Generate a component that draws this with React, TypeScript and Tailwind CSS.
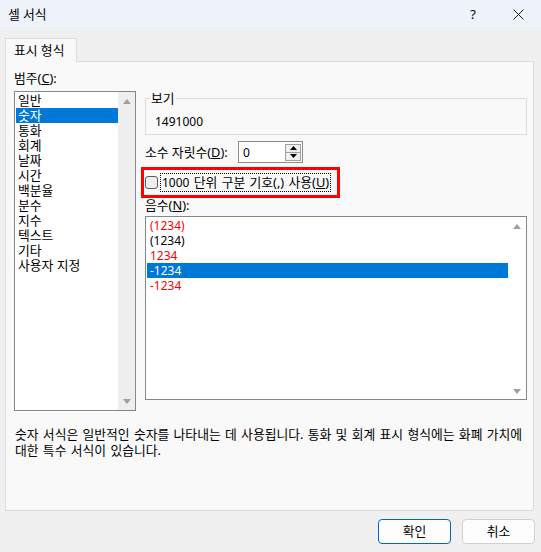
import React from "react";

const Up = ({ color = "#a0a0a0", w = 8, h = 5 }: { color?: string; w?: number; h?: number }) => (
  <svg width={w} height={h} viewBox={`0 0 ${w} ${h}`}>
    <path d={`M0 ${h} L${w / 2} 0 L${w} ${h} Z`} fill={color} />
  </svg>
);
const Down = ({ color = "#a0a0a0", w = 8, h = 5 }: { color?: string; w?: number; h?: number }) => (
  <svg width={w} height={h} viewBox={`0 0 ${w} ${h}`}>
    <path d={`M0 0 L${w / 2} ${h} L${w} 0 Z`} fill={color} />
  </svg>
);

const categories = ["일반", "숫자", "통화", "회계", "날짜", "시간", "백분율", "분수", "지수", "텍스트", "기타", "사용자 지정"];

const negatives: { t: string; c: string; sel?: boolean }[] = [
  { t: "(1234)", c: "text-[#ff0000]" },
  { t: "(1234)", c: "text-black" },
  { t: "1234", c: "text-[#ff0000]" },
  { t: "-1234", c: "text-white", sel: true },
  { t: "-1234", c: "text-[#ff0000]" },
];

export default function App() {
  return (
    <div className="w-[541px] h-[552px] bg-[#f0f0f0] flex flex-col text-[12.8px] leading-[15px] text-black font-[family-name:'Noto_Sans','Noto_Sans_CJK_KR',sans-serif] overflow-hidden">
      {/* Title bar */}
      <div className="h-[29px] shrink-0 bg-[#eef2f9] flex items-center pl-[8px] pr-[17px]">
        <span className="flex-1">셀 서식</span>
        <span className="text-[13px]">?</span>
        <svg width="11" height="11" viewBox="0 0 11 11" className="ml-[37px]">
          <path d="M0.5 0.5 L10.5 10.5 M10.5 0.5 L0.5 10.5" stroke="#1a1a1a" strokeWidth="1" />
        </svg>
      </div>

      {/* Tab */}
      <div className="mt-[9px] pl-[5px] flex">
        <div className="w-[72px] h-[24px] -mb-px relative z-10 border border-b-0 border-[#dcdcdc] bg-[#f9f9f9] pl-[8px] flex items-center">
          표시 형식
        </div>
      </div>

      {/* Panel */}
      <div className="ml-[5px] w-[529px] h-[450px] shrink-0 border border-[#dcdcdc] bg-[#f9f9f9] pt-[9px] flex flex-col">
        <div className="flex items-start pl-[8px]">
          {/* Left column */}
          <div className="w-[122px] flex flex-col">
            <div className="h-[15px]">
              범주(<span className="underline">C</span>):
            </div>
            <div className="mt-[5px] h-[320px] border border-[#828790] bg-white flex">
              <div className="flex-1 pl-[1px] pt-[1px] flex flex-col">
                {categories.map((c, i) => (
                  <div
                    key={c}
                    className={`h-[15px] pl-[2px] whitespace-nowrap ${i === 1 ? "bg-[#0078d7] text-white" : ""}`}
                  >
                    {c}
                  </div>
                ))}
              </div>
              <div className="w-[17px] bg-[#eeeeee] flex flex-col items-center justify-between pt-[7px] pb-[6px]">
                <Up />
                <Down />
              </div>
            </div>
          </div>

          {/* Right column */}
          <div className="ml-[9px] w-[382px] mt-[27px] flex flex-col">
            {/* Sample group */}
            <div className="relative h-[37px] border border-[#dcdcdc] pl-[9px] pt-[15px] text-[12px]">
              <span className="absolute -top-[8px] left-[4px] px-[1px] bg-[#f9f9f9] text-[12.8px]">보기</span>
              1491000
            </div>

            {/* Decimal places */}
            <div className="mt-[6px] h-[22px] flex items-center">
              <div className="w-[93px] whitespace-nowrap">
                소수 자릿수(<span className="underline">D</span>):
              </div>
              <div className="w-[65px] h-[22px] border border-[#8a8a8a] bg-white flex items-center pl-[4px] pr-[1px]">
                <span className="flex-1 text-[12px]">0</span>
                <div className="w-[16px] flex flex-col">
                  <div className="h-[9px] border border-[#a0a0a0] bg-[#f0f0f0] flex items-center justify-center">
                    <Up color="#000" w={7} h={4} />
                  </div>
                  <div className="h-[9px] -mt-px border border-[#a0a0a0] bg-[#f0f0f0] flex items-center justify-center">
                    <Down color="#000" w={7} h={4} />
                  </div>
                </div>
              </div>
            </div>

            {/* Thousands separator (highlighted) */}
            <div className="mt-[4px] -ml-[4px] w-[199px] h-[31px] border-[3px] border-[#ff0000] flex items-center">
              <div className="ml-[1px] w-[13px] h-[13px] rounded-[3px] border border-[#5c5c5c] bg-[#efefef] shrink-0" />
              <div className="ml-[2px] h-[19px] border border-dotted border-black px-[1px] flex items-center whitespace-nowrap [word-spacing:1px]">
                <span className="text-[12px]">1000</span>&nbsp;단위 구분 기호(,) 사용(<span className="underline">U</span>)
              </div>
            </div>

            {/* Negative numbers */}
            <div className="h-[15px]">
              음수(<span className="underline">N</span>):
            </div>
            <div className="mt-[3px] h-[184px] border border-[#828790] bg-white flex text-[12px]">
              <div className="flex-1 pl-[1px] pt-[1px] flex flex-col">
                {negatives.map((n, i) => (
                  <div key={i} className={`h-[15px] pl-[3px] ${n.c} ${n.sel ? "bg-[#0078d7]" : ""}`}>
                    {n.t}
                  </div>
                ))}
              </div>
              <div className="w-[18px] flex flex-col items-center justify-between pt-[7px] pb-[5px]">
                <Up />
                <Down />
              </div>
            </div>
          </div>
        </div>

        {/* Description */}
        <div className="mt-[15px] pl-[9px] leading-[16px] whitespace-nowrap [word-spacing:1px]">
          숫자 서식은 일반적인 숫자를 나타내는 데 사용됩니다. 통화 및 회계 표시 형식에는 화폐 가치에
          <br />
          대한 특수 서식이 있습니다.
        </div>
      </div>

      {/* Buttons */}
      <div className="mt-[8px] pr-[6px] flex justify-end gap-[11px]">
        <button className="w-[73px] h-[25px] rounded-[4px] border border-[#0067c0] bg-[#fdfdfd] flex items-center justify-center">
          확인
        </button>
        <button className="w-[73px] h-[25px] rounded-[4px] border border-[#d0d0d0] bg-[#fdfdfd] flex items-center justify-center">
          취소
        </button>
      </div>
    </div>
  );
}
